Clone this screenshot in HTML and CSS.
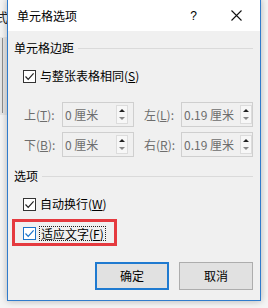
FILE: index.html
```html
<!DOCTYPE html>
<html lang="zh-CN">
<head>
<meta charset="utf-8">
<title>单元格选项</title>
<link rel="stylesheet" href="styles.css">
</head>
<body>
<div class="desk">
  <span class="desk-text">式</span>
  <span class="desk-panel"></span>
  <span class="desk-rule"></span>
</div>
<div class="dialog">
  <div class="titlebar">
    <span class="title">单元格选项</span>
    <span class="help">?</span>
    <svg class="close" width="11" height="11" viewBox="0 0 11 11"><path d="M0.5 0.5L10.5 10.5M10.5 0.5L0.5 10.5" stroke="#111" stroke-width="1.1" fill="none"/></svg>
  </div>
  <div class="content">
    <div class="group"><span>单元格边距</span><i class="rule"></i></div>
    <div class="check">
      <span class="box"><svg width="11" height="11" viewBox="0 0 11 11"><path d="M1.5 5.5L4.2 8.3L9.6 2.4" stroke="#222" stroke-width="1.2" fill="none"/></svg></span>
      <span>与整张表格相同(<u>S</u>)</span>
    </div>
    <div class="fields">
      <span class="lbl">上(<u>T</u>):</span>
      <div class="field"><span class="val">0 厘米</span><span class="spin spin-inset"><i class="up"></i><i class="down"></i></span></div>
      <span class="lbl lbl2">左(<u>L</u>):</span>
      <div class="field"><span class="val">0.19 厘米</span><span class="spin"><i class="up"></i><i class="down"></i></span></div>
      <span class="lbl">下(<u>B</u>):</span>
      <div class="field"><span class="val">0 厘米</span><span class="spin spin-inset"><i class="up"></i><i class="down"></i></span></div>
      <span class="lbl lbl2">右(<u>R</u>):</span>
      <div class="field"><span class="val">0.19 厘米</span><span class="spin"><i class="up"></i><i class="down"></i></span></div>
    </div>
    <div class="group group2"><span>选项</span><i class="rule"></i></div>
    <div class="check">
      <span class="box"><svg width="11" height="11" viewBox="0 0 11 11"><path d="M1.5 5.5L4.2 8.3L9.6 2.4" stroke="#222" stroke-width="1.2" fill="none"/></svg></span>
      <span>自动换行(<u>W</u>)</span>
    </div>
    <div class="mark">
      <div class="check check-focus">
        <span class="box box-blue"><svg width="11" height="11" viewBox="0 0 11 11"><path d="M1.5 5.5L4.2 8.3L9.6 2.4" stroke="#1a73c9" stroke-width="1.2" fill="none"/></svg></span>
        <span class="focus">适应文字(<u>F</u>)</span>
      </div>
    </div>
    <div class="buttons">
      <button class="btn btn-default">确定</button>
      <button class="btn">取消</button>
    </div>
  </div>
</div>
</body>
</html>
```
FILE: styles.css
```css
* { box-sizing: border-box; }
html, body { margin: 0; padding: 0; }
body {
  width: 268px;
  height: 308px;
  overflow: hidden;
  position: relative;
  background: #f4f4f4;
  font-family: "Noto Sans CJK SC", "Microsoft YaHei", sans-serif;
  font-size: 12px;
  color: #000;
}
.desk { position: absolute; inset: 0; }
.desk-text {
  position: absolute; left: -5px; top: 9px;
  font-size: 13px; line-height: 16px; color: #222;
}
.desk-panel {
  position: absolute; left: 0; top: 37px; width: 8px; height: 78px;
  background: #e6e6e6;
}
.desk-rule {
  position: absolute; left: 2px; top: 38px; width: 1px; height: 75px;
  background: #8d8d8d;
}
.dialog {
  position: absolute;
  left: 7px; top: -1px;
  width: 254px; height: 302px;
  border: 1px solid #2f7bcc;
  background: #f0f0f0;
  box-shadow: 0 0 7px rgba(0,0,0,0.28);
  display: flex;
  flex-direction: column;
}
.titlebar {
  height: 31px;
  background: #fff;
  display: flex;
  align-items: center;
  padding: 0 18px 0 9px;
  flex: none;
}
.title { flex: 1; line-height: 16px; }
.help { font-size: 12px; line-height: 16px; margin-right: 34px; font-family: "Liberation Sans", sans-serif; }
.close { display: block; }
.content {
  flex: 1;
  padding: 9px 7px 0 6px;
}
.group {
  display: flex;
  align-items: center;
  gap: 4px;
  height: 16px;
  line-height: 16px;
}
.group2 { margin-top: 11px; }
.rule { flex: 1; height: 1px; background: #dadada; }
.check {
  display: flex;
  align-items: center;
  height: 16px;
  line-height: 16px;
  padding-left: 9px;
  margin-top: 12px;
}
.box {
  width: 13px; height: 13px;
  border: 1px solid #333;
  background: #fff;
  margin-right: 4px;
  display: flex;
  align-items: center;
  justify-content: center;
  flex: none;
}
.box svg { display: block; }
.box-blue { border-color: #1a73c9; }
.mark {
  margin-top: 7px;
  margin-left: -2px;
  width: 105px;
  border: 3px solid #e53a3f;
  padding: 3px 0 2px 0;
}
.check-focus { margin-top: 0; padding-left: 8px; }
.check-focus .box { margin-right: 3px; }
.focus {
  border: 1px dotted #222;
  line-height: 13px;
  padding: 0 1px;
}
.fields {
  display: grid;
  grid-template-columns: 38px 72px 47px 72px;
  grid-auto-rows: 25px;
  row-gap: 5px;
  margin-top: 18px;
  padding-left: 10px;
  align-items: center;
}
.lbl { color: #6d6d6d; line-height: 16px; }
.lbl2 { padding-left: 10px; }
.field {
  height: 25px;
  border: 1px solid #cfcfcf;
  display: flex;
  align-items: center;
}
.val {
  flex: 1;
  min-width: 0;
  overflow: hidden;
  white-space: nowrap;
  padding-left: 2px;
  color: #6d6d6d;
  line-height: 16px;
}
.spin {
  flex: none;
  width: 12px;
  height: 19px;
  display: flex;
  flex-direction: column;
  border: 1px solid #dcdcdc;
  background: #f7f7f7;
}
.spin-inset { margin-right: 5px; }
.spin i {
  flex: 1;
  display: flex;
  align-items: center;
  justify-content: center;
}
.spin .up::before {
  content: "";
  border-left: 3px solid transparent;
  border-right: 3px solid transparent;
  border-bottom: 3px solid #222;
}
.spin .down::before {
  content: "";
  border-left: 3px solid transparent;
  border-right: 3px solid transparent;
  border-top: 3px solid #888;
}
.buttons {
  display: flex;
  justify-content: flex-end;
  gap: 10px;
  margin-top: 16px;
}
.btn {
  width: 74px;
  height: 28px;
  border: 1px solid #adadad;
  background: #e1e1e1;
  font-family: inherit;
  font-size: 12px;
  color: #000;
  padding: 0;
  line-height: 16px;
}
.btn-default { border: 2px solid #1f7ad0; }
```
